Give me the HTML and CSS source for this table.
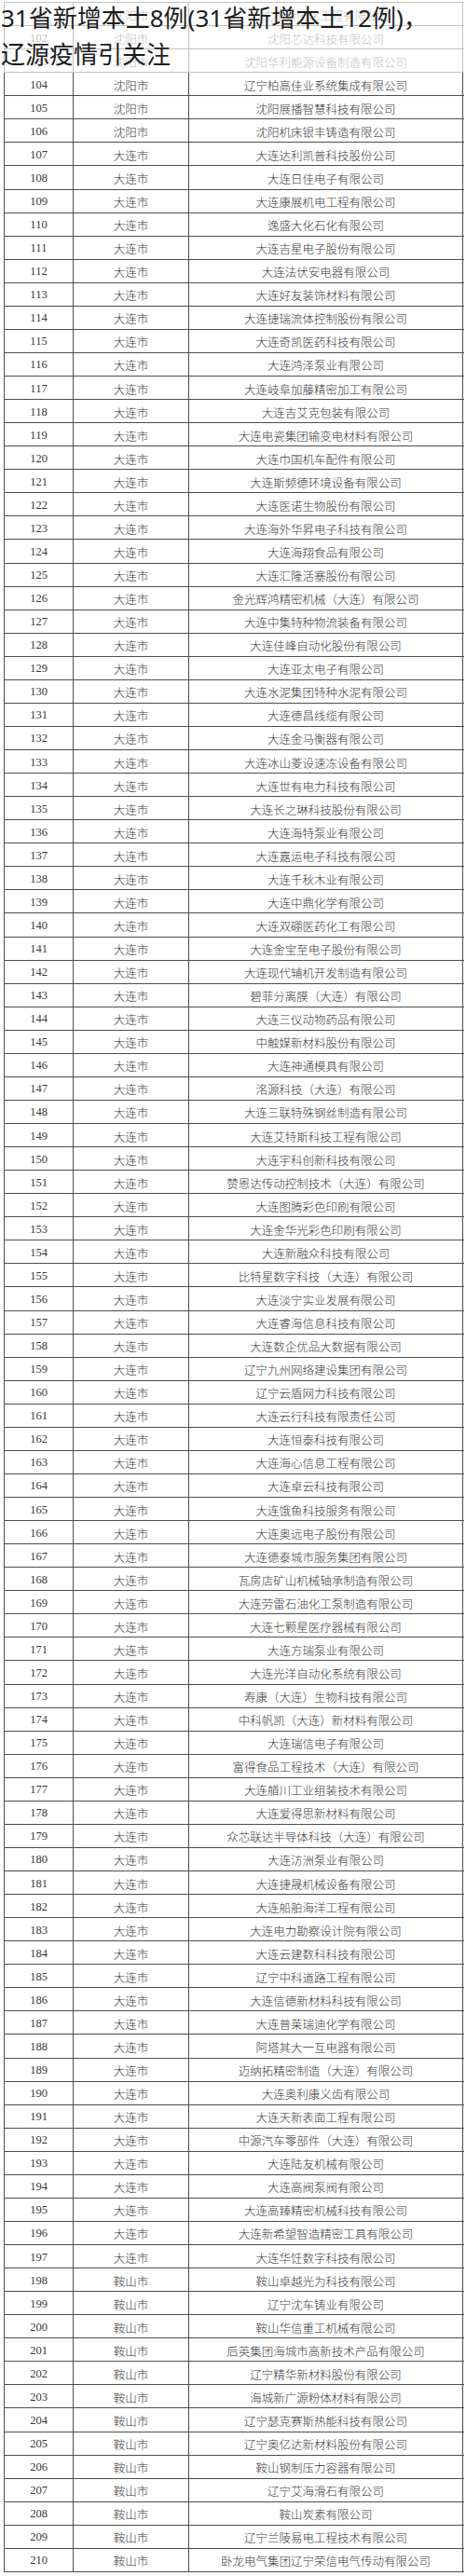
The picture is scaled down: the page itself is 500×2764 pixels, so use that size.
FILE: index.html
```html
<!DOCTYPE html>
<html lang="zh-CN">
<head>
<meta charset="utf-8">
<title>31省新增本土8例</title>
<link rel="stylesheet" href="styles.css">
</head>
<body>
<div class="page">
  <div class="title">31省新增本土8例(31省新增本土12例)，<br>辽源疫情引关注</div>
  <div class="table" id="tbl"></div>
</div>
<script src="app.js"></script>
</body>
</html>
```
FILE: app.js
```js
var rows = [
[101,"沈阳市","沈阳新阳化工程有限公司"],
[102,"沈阳市","沈阳芯达科技有限公司"],
[103,"沈阳市","沈阳华利能源设备制造有限公司"],
[104,"沈阳市","辽宁柏高佳业系统集成有限公司"],
[105,"沈阳市","沈阳展播智慧科技有限公司"],
[106,"沈阳市","沈阳机床银丰铸造有限公司"],
[107,"大连市","大连达利凯普科技股份公司"],
[108,"大连市","大连日佳电子有限公司"],
[109,"大连市","大连康展机电工程有限公司"],
[110,"大连市","逸盛大化石化有限公司"],
[111,"大连市","大连吉星电子股份有限公司"],
[112,"大连市","大连法伏安电器有限公司"],
[113,"大连市","大连好友装饰材料有限公司"],
[114,"大连市","大连捷瑞流体控制股份有限公司"],
[115,"大连市","大连奇凯医药科技有限公司"],
[116,"大连市","大连鸿泽泵业有限公司"],
[117,"大连市","大连岐阜加藤精密加工有限公司"],
[118,"大连市","大连吉艾克包装有限公司"],
[119,"大连市","大连电瓷集团输变电材料有限公司"],
[120,"大连市","大连巾国机车配件有限公司"],
[121,"大连市","大连斯频德环境设备有限公司"],
[122,"大连市","大连医诺生物股份有限公司"],
[123,"大连市","大连海外华昇电子科技有限公司"],
[124,"大连市","大连海翔食品有限公司"],
[125,"大连市","大连汇隆活塞股份有限公司"],
[126,"大连市","金光辉鸿精密机械（大连）有限公司"],
[127,"大连市","大连中集特种物流装备有限公司"],
[128,"大连市","大连佳峰自动化股份有限公司"],
[129,"大连市","大连亚太电子有限公司"],
[130,"大连市","大连水泥集团特种水泥有限公司"],
[131,"大连市","大连德昌线缆有限公司"],
[132,"大连市","大连金马衡器有限公司"],
[133,"大连市","大连冰山菱设速冻设备有限公司"],
[134,"大连市","大连世有电力科技有限公司"],
[135,"大连市","大连长之琳科技股份有限公司"],
[136,"大连市","大连海特泵业有限公司"],
[137,"大连市","大连嘉运电子科技有限公司"],
[138,"大连市","大连千秋木业有限公司"],
[139,"大连市","大连中鼎化学有限公司"],
[140,"大连市","大连双硼医药化工有限公司"],
[141,"大连市","大连金宝至电子股份有限公司"],
[142,"大连市","大连现代辅机开发制造有限公司"],
[143,"大连市","碧菲分离膜（大连）有限公司"],
[144,"大连市","大连三仪动物药品有限公司"],
[145,"大连市","中触媒新材料股份有限公司"],
[146,"大连市","大连神通模具有限公司"],
[147,"大连市","洺源科技（大连）有限公司"],
[148,"大连市","大连三联特殊钢丝制造有限公司"],
[149,"大连市","大连艾特斯科技工程有限公司"],
[150,"大连市","大连宇科创新科技有限公司"],
[151,"大连市","赞恩达传动控制技术（大连）有限公司"],
[152,"大连市","大连图腾彩色印刷有限公司"],
[153,"大连市","大连金华光彩色印刷有限公司"],
[154,"大连市","大连新融众科技有限公司"],
[155,"大连市","比特星数字科技（大连）有限公司"],
[156,"大连市","大连淡宁实业发展有限公司"],
[157,"大连市","大连睿海信息科技有限公司"],
[158,"大连市","大连数企优品大数据有限公司"],
[159,"大连市","辽宁九州网络建设集团有限公司"],
[160,"大连市","辽宁云盾网力科技有限公司"],
[161,"大连市","大连云行科技有限责任公司"],
[162,"大连市","大连恒泰科技有限公司"],
[163,"大连市","大连海心信息工程有限公司"],
[164,"大连市","大连卓云科技有限公司"],
[165,"大连市","大连饿鱼科技服务有限公司"],
[166,"大连市","大连奥远电子股份有限公司"],
[167,"大连市","大连德泰城市服务集团有限公司"],
[168,"大连市","瓦房店矿山机械轴承制造有限公司"],
[169,"大连市","大连劳雷石油化工泵制造有限公司"],
[170,"大连市","大连七颗星医疗器械有限公司"],
[171,"大连市","大连方瑞泵业有限公司"],
[172,"大连市","大连光洋自动化系统有限公司"],
[173,"大连市","寿康（大连）生物科技有限公司"],
[174,"大连市","中科帆凯（大连）新材料有限公司"],
[175,"大连市","大连瑞信电子有限公司"],
[176,"大连市","富得食品工程技术（大连）有限公司"],
[177,"大连市","大连艏川工业组装技术有限公司"],
[178,"大连市","大连爱得思新材料有限公司"],
[179,"大连市","众芯联达半导体科技（大连）有限公司"],
[180,"大连市","大连汸洲泵业有限公司"],
[181,"大连市","大连捷晟机械设备有限公司"],
[182,"大连市","大连船舶海洋工程有限公司"],
[183,"大连市","大连电力勘察设计院有限公司"],
[184,"大连市","大连云建数科科技有限公司"],
[185,"大连市","辽宁中科道路工程有限公司"],
[186,"大连市","大连信德新材料科技有限公司"],
[187,"大连市","大连普莱瑞迪化学有限公司"],
[188,"大连市","阿塔其大一互电器有限公司"],
[189,"大连市","迈纳拓精密制造（大连）有限公司"],
[190,"大连市","大连奥利康义齿有限公司"],
[191,"大连市","大连天新表面工程有限公司"],
[192,"大连市","中源汽车零部件（大连）有限公司"],
[193,"大连市","大连陆友机械有限公司"],
[194,"大连市","大连高阀泵阀有限公司"],
[195,"大连市","大连高臻精密机械科技有限公司"],
[196,"大连市","大连新希望智造精密工具有限公司"],
[197,"大连市","大连华饪数字科技有限公司"],
[198,"鞍山市","鞍山卓越光为科技有限公司"],
[199,"鞍山市","辽宁沈车铸业有限公司"],
[200,"鞍山市","鞍山华信重工机械有限公司"],
[201,"鞍山市","后英集团海城市高新技术产品有限公司"],
[202,"鞍山市","辽宁精华新材料股份有限公司"],
[203,"鞍山市","海城新广源粉体材料有限公司"],
[204,"鞍山市","辽宁瑟克赛斯热能科技有限公司"],
[205,"鞍山市","辽宁奥亿达新材料股份有限公司"],
[206,"鞍山市","鞍山钢制压力容器有限公司"],
[207,"鞍山市","辽宁艾海滑石有限公司"],
[208,"鞍山市","鞍山炭素有限公司"],
[209,"鞍山市","辽宁兰陵易电工程技术有限公司"],
[210,"鞍山市","卧龙电气集团辽宁荣信电气传动有限公司"]
];
var tbl = document.getElementById("tbl");
var html = "";
for (var i = 0; i < rows.length; i++) {
  var r = rows[i];
  html += '<div class="row"><div class="cell num">' + r[0] +
          '</div><div class="cell city">' + r[1] +
          '</div><div class="cell name">' + r[2] + '</div></div>';
}
tbl.innerHTML = html;
```
FILE: styles.css
```css
html, body {
  margin: 0;
  padding: 0;
  background: #ffffff;
}
.page {
  position: relative;
  width: 500px;
  padding-top: 2px;
}
.title {
  position: absolute;
  left: 0;
  top: 0;
  width: 500px;
  height: 78px;
  box-sizing: border-box;
  padding-left: 1px;
  background: rgba(255, 255, 255, 0.66);
  color: #1c1c1c;
  font-family: "Noto Sans", "Noto Sans CJK SC", sans-serif;
  font-size: 26px;
  line-height: 39px;
  white-space: nowrap;
  z-index: 2;
}
.table {
  margin-left: 4px;
  width: 493px;
  border-left: 1px solid #4d4d4d;
  border-top: 1px solid #4d4d4d;
}
.row {
  display: grid;
  grid-template-columns: 74px 124px 294px;
  height: 25.065px;
  box-sizing: border-box;
  border-bottom: 1px solid #4d4d4d;
}
.cell {
  display: flex;
  align-items: center;
  justify-content: center;
  border-right: 1px solid #4d4d4d;
  padding-top: 2px;
  box-sizing: border-box;
  color: #383838;
  font-family: "Liberation Serif", "Noto Sans CJK SC", serif;
  font-size: 12.5px;
  white-space: nowrap;
}
.num {
  font-size: 12.5px;
}
.city, .name {
  font-weight: 300;
}
```
